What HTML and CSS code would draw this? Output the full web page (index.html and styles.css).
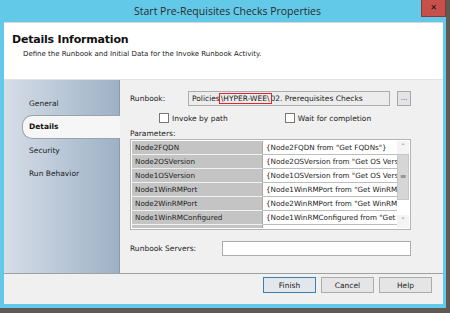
FILE: index.html
```html
<!DOCTYPE html>
<html lang="en">
<head>
    <meta charset="UTF-8">
    <title>Start Pre-Requisites Checks Properties</title>
    <link rel="stylesheet" href="styles.css">
</head>
<body>

<div class="window">
    <!-- Title bar -->
    <div class="titlebar">
        <span></span>
        <span class="title">Start Pre-Requisites Checks Properties</span>
        <span class="close">&#x2715;</span>
    </div>

    <div class="client">
        <!-- Header -->
        <div class="header">
            <h1>Details Information</h1>
            <p>Define the Runbook and Initial Data for the Invoke Runbook Activity.</p>
        </div>

        <div class="main">
            <!-- Tabs -->
            <div class="nav">
                <a>General</a>
                <a class="active">Details</a>
                <a>Security</a>
                <a>Run Behavior</a>
            </div>

            <!-- Details -->
            <div class="content">
                <div class="row">
                    <label class="lbl">Runbook:</label>
                    <div class="textbox path">Policies<span class="mark">\HYPER-WEE\</span>02. Prerequisites Checks</div>
                    <button class="dots">...</button>
                </div>
                <div class="checks">
                    <label class="check"><span class="box"></span>Invoke by path</label>
                    <label class="check"><span class="box"></span>Wait for completion</label>
                </div>
                <div class="lbl">Parameters:</div>
                <div class="grid">
                    <div class="cells">
                        <div class="name">Node2FQDN</div><div class="val">{Node2FQDN from "Get FQDNs"}</div>
                        <div class="name">Node2OSVersion</div><div class="val">{Node2OSVersion from "Get OS Version"}</div>
                        <div class="name">Node1OSVersion</div><div class="val">{Node1OSVersion from "Get OS Version"}</div>
                        <div class="name">Node1WinRMPort</div><div class="val">{Node1WinRMPort from "Get WinRM Port"}</div>
                        <div class="name">Node2WinRMPort</div><div class="val">{Node2WinRMPort from "Get WinRM Port"}</div>
                        <div class="name">Node1WinRMConfigured</div><div class="val">{Node1WinRMConfigured from "Get WinRM"}</div>
                        <div class="name"></div><div class="val"></div>
                    </div>
                    <div class="scroll">
                        <span class="arrow">&#x2c4;</span>
                        <span class="thumb">&#x2261;</span>
                        <span class="track"></span>
                        <span class="arrow">&#x2c5;</span>
                    </div>
                </div>
                <div class="row servers">
                    <label class="lbl">Runbook Servers:</label>
                    <div class="textbox wide"></div>
                </div>
            </div>
        </div>

        <!-- Buttons -->
        <div class="footer">
            <button class="btn default">Finish</button>
            <button class="btn">Cancel</button>
            <button class="btn">Help</button>
        </div>
    </div>
</div>

</body>
</html>
```

FILE: styles.css
```css
body {
    margin: 0;
    padding: 0;
    width: 450px;
    height: 313px;
    overflow: hidden;
    background-color: #5e5954;
    font-family: "DejaVu Sans", sans-serif;
    color: #1a1a1a;
}

.window {
    width: 446px;
    height: 308px;
    box-sizing: border-box;
    background-color: #63c9e9;
    padding: 0 3px 4px 4px;
    display: flex;
    flex-direction: column;
}

.titlebar {
    height: 22px;
    display: grid;
    grid-template-columns: 1fr auto 1fr;
    align-items: start;
}

.title {
    font-family: "Open Sans", sans-serif;
    font-size: 10.5px;
    line-height: 23px;
    color: #2b2b2b;
    margin-left: 8px;
}

.close {
    justify-self: end;
    width: 25px;
    height: 17px;
    margin-right: -3px;
    background-color: #c7504a;
    border: 1px solid #8a3a36;
    border-top: none;
    box-sizing: border-box;
    color: #111;
    font-size: 8px;
    font-weight: bold;
    text-align: center;
    line-height: 16px;
}

.client {
    flex: 1;
    background-color: #f0f0f0;
    display: flex;
    flex-direction: column;
}

.header {
    height: 57px;
    box-sizing: border-box;
    background-color: #fff;
    border-top: 1px solid #d8d8d8;
    padding: 10px 8px 0;
}

.header h1 {
    margin: 0;
    font-size: 11px;
    font-weight: bold;
    color: #111;
    letter-spacing: -0.2px;
}

.header p {
    margin: 4px 0 0 11px;
    font-size: 7px;
    color: #222;
}

.main {
    height: 193px;
    display: flex;
    border-top: 1px solid #e2e2e2;
    border-bottom: 1px solid #a0a0a0;
}

.nav {
    width: 116px;
    flex-shrink: 0;
    background: linear-gradient(to right, #d6dee7, #9db1c6);
    border-right: 1px solid #8e9aa6;
    display: flex;
    flex-direction: column;
    padding-top: 12px;
    box-sizing: border-box;
}

.nav a {
    display: block;
    height: 23.3px;
    line-height: 23.3px;
    padding-left: 7px;
    font-size: 7.5px;
    color: #222;
    margin-left: 18px;
    margin-right: -1px;
}

.nav a.active {
    background-color: #f6f6f6;
    border: 1px solid #9aa2ab;
    border-right: none;
    border-radius: 10px 0 0 10px;
    padding-left: 6px;
    font-weight: bold;
    color: #111;
    height: 21.3px;
    line-height: 21.3px;
}

.content {
    flex: 1;
    padding: 11px 32px 0 10px;
    display: flex;
    flex-direction: column;
}

.row {
    display: flex;
    align-items: center;
}

.lbl {
    font-size: 7.5px;
    color: #222;
}

.row .lbl {
    width: 58px;
}

.textbox {
    height: 15px;
    box-sizing: border-box;
    border: 1px solid #acacac;
    background-color: #fff;
    font-size: 7.5px;
    line-height: 13px;
    padding-left: 3px;
}

.textbox.path {
    width: 202px;
    background-color: #ececec;
    white-space: nowrap;
    overflow: hidden;
}

.mark {
    outline: 1.5px solid #e0262a;
    outline-offset: 0;
    padding: 0 1px;
}

.dots {
    width: 14px;
    height: 15px;
    margin-left: 7px;
    padding: 0;
    border: 1px solid #a6a6a6;
    background-color: #e4e4e4;
    font-size: 7px;
    line-height: 9px;
    color: #3a5aa8;
    font-family: "DejaVu Sans", sans-serif;
}

.checks {
    display: flex;
    padding-left: 29px;
    gap: 57px;
    margin-top: 7px;
    margin-bottom: 6px;
}

.check {
    display: flex;
    align-items: center;
    gap: 3px;
    font-size: 7.5px;
    color: #222;
}

.box {
    width: 8px;
    height: 8px;
    border: 1px solid #777;
    background-color: #fff;
}

.grid {
    margin-top: 1px;
    height: 91px;
    box-sizing: border-box;
    border: 1px solid #b4b4b4;
    padding: 1px;
    display: flex;
    background-color: #fff;
}

.cells {
    flex: 1;
    display: grid;
    grid-template-columns: 131px 1fr;
    grid-auto-rows: 14px;
    overflow: hidden;
}

.cells div {
    font-size: 7.2px;
    line-height: 13px;
    padding-left: 3px;
    border-bottom: 1px solid #e4e4e4;
    white-space: nowrap;
    overflow: hidden;
}

.cells .name {
    background-color: #c4c4c4;
    border-bottom-color: #f0f0f0;
    border-right: 1px solid #a8a8a8;
    color: #1a1a1a;
}

.cells .val {
    background-color: #fff;
    border-bottom-color: #bdbdbd;
}

.scroll {
    width: 12px;
    display: flex;
    flex-direction: column;
    background-color: #f4f4f4;
}

.arrow {
    height: 13px;
    font-size: 7px;
    line-height: 13px;
    text-align: center;
    color: #555;
}

.thumb {
    height: 46px;
    background-color: #d6d6d6;
    border: 1px solid #c6c6c6;
    box-sizing: border-box;
    font-size: 8px;
    line-height: 44px;
    text-align: center;
    color: #666;
}

.track {
    flex: 1;
    background-color: #fff;
}

.servers {
    margin-top: 11px;
}

.servers .lbl {
    width: 92px;
}

.textbox.wide {
    flex: 1;
}

.footer {
    flex: 1;
    display: flex;
    justify-content: flex-end;
    align-items: flex-start;
    gap: 5px;
    padding: 3px 11px 0 0;
}

.btn {
    width: 53px;
    height: 16px;
    padding: 0;
    border: 1px solid #acacac;
    background-color: #e5e5e5;
    font-family: "DejaVu Sans", sans-serif;
    font-size: 7.5px;
    color: #222;
}

.btn.default {
    border-color: #3c7fb1;
    background-color: #e2e7ec;
}
```
